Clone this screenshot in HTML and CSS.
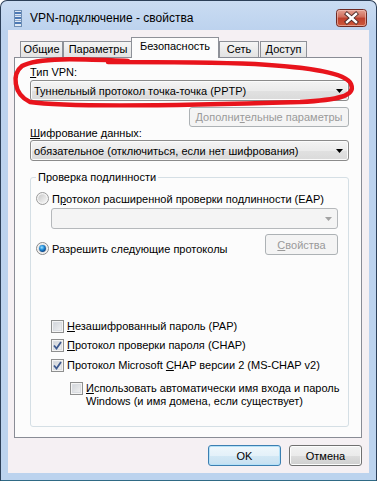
FILE: index.html
```html
<!DOCTYPE html>
<html lang="ru">
<head>
<meta charset="utf-8">
<title>VPN-подключение - свойства</title>
<link rel="stylesheet" href="styles.css">
</head>
<body>
<div class="window">
  <div class="titlebar">
    <svg class="appicon" width="8" height="17" viewBox="0 0 8 17">
      <rect x="0.5" y="0.5" width="7" height="16" fill="#dfe8f3" stroke="#6f8fb5"/>
      <rect x="1" y="2" width="6" height="2" fill="#4d79b4"/>
      <rect x="1" y="5" width="6" height="1" fill="#8aa6cc"/>
      <rect x="1" y="7" width="6" height="2" fill="#4d79b4"/>
      <rect x="1" y="10" width="6" height="1" fill="#8aa6cc"/>
      <rect x="1" y="12" width="6" height="2" fill="#4d79b4"/>
    </svg>
    <span class="title">VPN-подключение - свойства</span>
    <div class="close">
      <svg width="31" height="18" viewBox="0 0 31 18">
        <defs>
          <linearGradient id="cg" x1="0" y1="0" x2="0" y2="1">
            <stop offset="0" stop-color="#e6a496"/>
            <stop offset="0.45" stop-color="#cf6c5a"/>
            <stop offset="0.5" stop-color="#bd3f2c"/>
            <stop offset="1" stop-color="#cf5a3c"/>
          </linearGradient>
        </defs>
        <rect x="0.5" y="0.5" width="30" height="17" rx="3" fill="url(#cg)" stroke="#6e2a24"/>
        <rect x="1.5" y="1.5" width="28" height="15" rx="2" fill="none" stroke="#f3c9bf" stroke-opacity="0.6"/>
        <path d="M11 5 L20 13 M20 5 L11 13" stroke="#4a2a28" stroke-width="4.2" stroke-linecap="square"/>
        <path d="M11 5 L20 13 M20 5 L11 13" stroke="#ffffff" stroke-width="2.4" stroke-linecap="square"/>
      </svg>
    </div>
  </div>
  <div class="client">
    <div class="tabs">
      <div class="tab tab-general">Общие</div>
      <div class="tab tab-params">Параметры</div>
      <div class="tab tab-security selected">Безопасность</div>
      <div class="tab tab-net">Сеть</div>
      <div class="tab tab-access">Доступ</div>
    </div>
    <div class="panel">
      <div class="label"><u>Т</u>ип VPN:</div>
      <div class="combo">
        <span>Туннельный протокол точка-точка (PPTP)</span>
        <svg class="arrow" width="7" height="4" viewBox="0 0 7 4"><polygon points="0,0 7,0 3.5,4" fill="#000"/></svg>
      </div>
      <div class="right-row">
        <div class="btn btn-advanced disabled">Дополни<u>т</u>ельные параметры</div>
      </div>
      <div class="label label-enc"><u>Ш</u>ифрование данных:</div>
      <div class="combo">
        <span>обязательное (отключиться, если нет шифрования)</span>
        <svg class="arrow" width="7" height="4" viewBox="0 0 7 4"><polygon points="0,0 7,0 3.5,4" fill="#000"/></svg>
      </div>
      <fieldset class="group">
        <legend>Проверка подлинности</legend>
        <div class="opt opt-eap">
          <svg class="radio" width="13" height="13" viewBox="0 0 13 13">
            <defs>
              <linearGradient id="rg" x1="0" y1="0" x2="1" y2="1">
                <stop offset="0" stop-color="#c9c9c9"/>
                <stop offset="1" stop-color="#f7f7f7"/>
              </linearGradient>
            </defs>
            <circle cx="6.5" cy="6.5" r="6" fill="#f4f4f4" stroke="#9a9a9a"/>
            <circle cx="6.5" cy="6.5" r="4.3" fill="url(#rg)"/>
          </svg>
          <span>П<u>р</u>отокол расширенной проверки подлинности (EAP)</span>
        </div>
        <div class="combo combo-disabled">
          <span></span>
          <svg class="arrow" width="7" height="4" viewBox="0 0 7 4"><polygon points="0,0 7,0 3.5,4" fill="#a3a3a3"/></svg>
        </div>
        <div class="allow-row">
          <div class="opt opt-allow">
            <svg class="radio" width="13" height="13" viewBox="0 0 13 13">
              <defs>
                <radialGradient id="rb" cx="0.4" cy="0.35" r="0.7">
                  <stop offset="0" stop-color="#9fe3ff"/>
                  <stop offset="0.5" stop-color="#1e8ad8"/>
                  <stop offset="1" stop-color="#0c3a78"/>
                </radialGradient>
              </defs>
              <circle cx="6.5" cy="6.5" r="6" fill="#f4f4f4" stroke="#8a8a8a"/>
              <circle cx="6.5" cy="6.5" r="4.3" fill="#d8d8d8"/>
              <circle cx="6.5" cy="6.5" r="3.4" fill="url(#rb)"/>
            </svg>
            <span>Разрешить сле<u>д</u>ующие протоколы</span>
          </div>
          <div class="btn btn-props disabled"><u>С</u>войства</div>
        </div>
        <div class="check check-pap">
          <span class="box"></span>
          <span class="ctext"><u>Н</u>езашифрованный пароль (PAP)</span>
        </div>
        <div class="check check-chap">
          <span class="box checked">
            <svg width="9" height="9" viewBox="0 0 9 9"><path d="M1 4.5 L3.5 7.5 L8 1" fill="none" stroke="#3e5a8f" stroke-width="1.8"/></svg>
          </span>
          <span class="ctext"><u>П</u>ротокол проверки пароля (CHAP)</span>
        </div>
        <div class="check check-ms">
          <span class="box checked">
            <svg width="9" height="9" viewBox="0 0 9 9"><path d="M1 4.5 L3.5 7.5 L8 1" fill="none" stroke="#3e5a8f" stroke-width="1.8"/></svg>
          </span>
          <span class="ctext">Протокол Microsoft <u>C</u>HAP версии 2 (MS-CHAP v2)</span>
        </div>
        <div class="check check-auto">
          <span class="box"></span>
          <span class="ctext"><u>И</u>спользовать автоматически имя входа и пароль<br>Windows (и имя домена, если существует)</span>
        </div>
      </fieldset>
    </div>
    <div class="buttons">
      <div class="btn btn-main btn-default">OK</div>
      <div class="btn btn-main">Отмена</div>
    </div>
  </div>
</div>
<svg class="marker" width="377" height="481" viewBox="0 0 377 481">
  <path d="M 128 61 C 80 59, 38 57, 22 66 C 12 74, 13 94, 30 102 C 70 108, 200 105, 300 102 C 338 100, 356 96, 351 84 C 346 72, 305 67, 255 64 C 205 62, 160 62, 108 62"
        fill="none" stroke="#e8141c" stroke-width="4.5" stroke-linecap="round" stroke-linejoin="round"/>
</svg>
</body>
</html>
```

FILE: styles.css
```css
* { box-sizing: border-box; }
html, body { margin: 0; padding: 0; }
body {
  position: relative;
  width: 377px;
  height: 481px;
  overflow: hidden;
  background: #ffffff;
  font-family: "Liberation Sans", Arial, sans-serif;
  font-size: 11px;
  color: #000;
}
u { text-decoration: underline; text-underline-offset: 1px; }

.window {
  width: 377px;
  height: 481px;
  border: 1px solid #2c3f58;
  border-bottom-color: #2f6a85;
  border-radius: 7px 7px 0 0;
  background: linear-gradient(#cadcf2, #bcd2ee 30px, #bcd3ee);
  padding: 0 7px 7px;
  display: flex;
  flex-direction: column;
}

.titlebar {
  height: 29px;
  display: flex;
  align-items: center;
  padding-top: 5px;
  flex: none;
}
.appicon { margin-left: 6px; flex: none; }
.title {
  margin-left: 8px;
  font-size: 12px;
  color: #000;
}
.close {
  margin-left: auto;
  margin-right: 2px;
  height: 18px;
  display: flex;
}

.client {
  flex: 1;
  min-height: 0;
  background: #f5f0f3;
  display: flex;
  flex-direction: column;
  padding: 7px 7px 8px 6px;
}

.tabs {
  display: flex;
  align-items: flex-end;
  height: 20px;
  padding-left: 6px;
  position: relative;
  z-index: 1;
  flex: none;
}
.tab {
  height: 16px;
  border: 1px solid #8e9198;
  border-bottom: none;
  background: linear-gradient(#f5f5f5, #e2e2e2);
  text-align: center;
  line-height: 14px;
  white-space: nowrap;
}
.tab-general { width: 43px; }
.tab-params { width: 70px; }
.tab-security { width: 88px; margin-left: -2px; }
.tab-net { width: 40px; }
.tab-access { width: 47px; margin-left: 1px; }
.tab.selected {
  height: 21px;
  margin-bottom: -1px;
  background: #fcfcfc;
  line-height: 17px;
}

.panel {
  border: 1px solid #898c95;
  background: #fcfcfc;
  display: flex;
  flex-direction: column;
  padding: 8px 12px 10px 15px;
  flex: none;
}

.label { line-height: 13px; }
.label-enc { line-height: 12px; }

.combo {
  margin-top: 1px;
  height: 21px;
  border: 1px solid #8b8b8b;
  border-radius: 3px;
  background: linear-gradient(#f4f4f4, #ebebeb 50%, #e1e1e1 51%, #dadada);
  box-shadow: inset 0 0 0 1px #fbfbfb;
  display: flex;
  align-items: center;
  padding: 0 4px 0 3px;
  white-space: nowrap;
}
.combo span { flex: 1; }
.arrow { flex: none; margin-right: 1px; }

.combo-disabled {
  margin: 3px 0 0 15px;
  border-color: #b5b8bb;
  background: #f4f4f4;
  box-shadow: none;
}

.right-row {
  display: flex;
  justify-content: flex-end;
  margin-top: 6px;
}

.btn {
  height: 20px;
  border: 1px solid #707070;
  border-radius: 3px;
  background: linear-gradient(#f2f2f2, #ebebeb 50%, #dddddd 51%, #cfcfcf);
  box-shadow: inset 0 0 0 1px #fcfcfc;
  display: flex;
  align-items: center;
  justify-content: center;
  white-space: nowrap;
}
.btn.disabled {
  border-color: #adb2b5;
  background: #f4f4f4;
  box-shadow: none;
  color: #9a9a9a;
}
.btn-advanced { width: 160px; }
.btn-props { width: 73px; height: 21px; color: #8a8a8a; }

.group {
  margin: 10px 0 0 0;
  padding: 0 10px 18px 5px;
  border: 1px solid #d5dfe5;
  border-radius: 3px;
  min-width: 0;
}
.group legend {
  padding: 0 2px;
  margin-left: 0;
  line-height: 13px;
}

.opt {
  display: flex;
  align-items: center;
  height: 13px;
  gap: 3px;
  white-space: nowrap;
}
.opt-eap { margin-top: 8px; }
.radio { flex: none; }

.allow-row {
  margin-top: 5px;
  display: flex;
  justify-content: space-between;
  align-items: flex-start;
}
.opt-allow { margin-top: 8px; }

.check {
  display: flex;
  align-items: flex-start;
  gap: 3px;
  line-height: 13px;
  margin-left: 15px;
}
.ctext { white-space: nowrap; }
.check-pap { margin-top: 65px; }
.check-chap { margin-top: 6px; }
.check-ms { margin-top: 7px; }
.check-auto { margin-top: 10px; margin-left: 34px; }

.box {
  flex: none;
  width: 13px;
  height: 13px;
  border: 1px solid #8e8f8f;
  background: linear-gradient(135deg, #cbcfd5, #f6f6f6);
  box-shadow: inset 0 0 0 1px #f4f4f4, inset 0 0 0 2px #dadde2;
  display: flex;
  align-items: center;
  justify-content: center;
}

.buttons {
  margin-top: 7px;
  display: flex;
  justify-content: flex-end;
  gap: 8px;
  flex: none;
}
.btn-main { width: 73px; height: 21px; }
.btn-default {
  border-color: #3c7fb1;
  box-shadow: inset 0 0 0 1px #b4e1f8;
  background: linear-gradient(#eef7fc, #e4f1f9 50%, #d3e8f5 51%, #c6e0f1);
}

.marker {
  position: absolute;
  left: 0;
  top: 0;
  pointer-events: none;
}
```
